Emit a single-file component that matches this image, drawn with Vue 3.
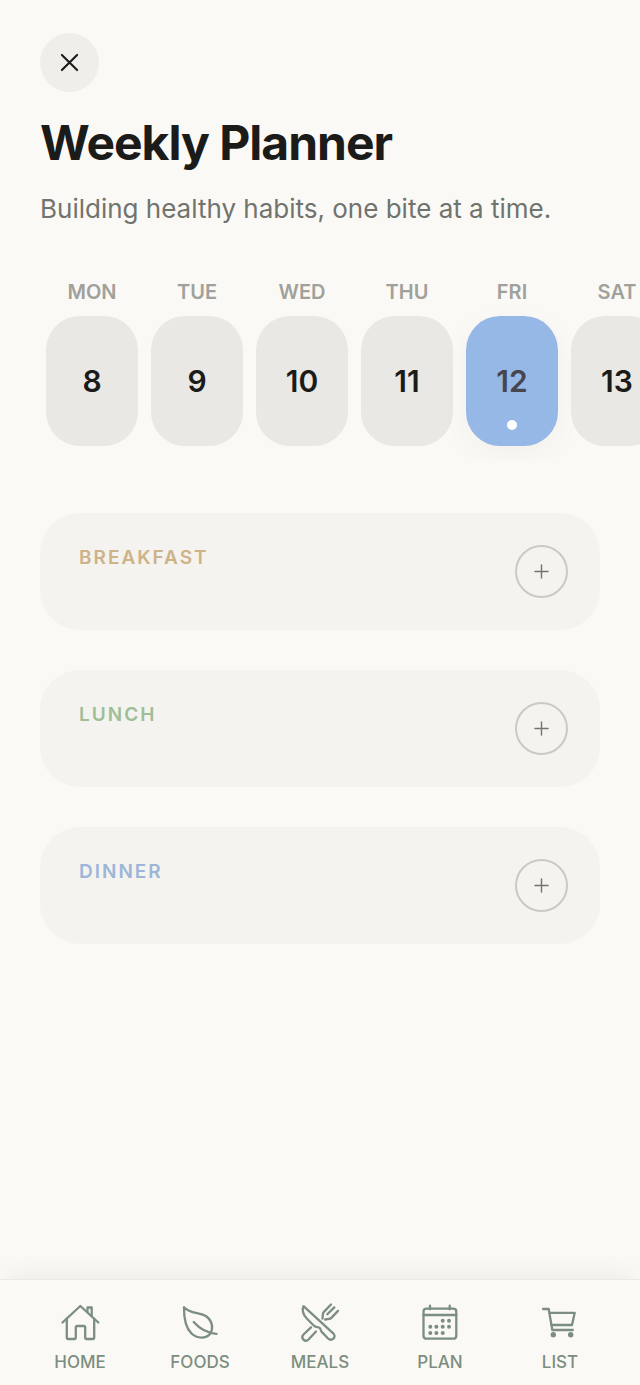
<script setup>
const days = [
  { name: 'MON', date: 8 },
  { name: 'TUE', date: 9 },
  { name: 'WED', date: 10 },
  { name: 'THU', date: 11 },
  { name: 'FRI', date: 12, active: true },
  { name: 'SAT', date: 13 },
]

const meals = [
  { name: 'BREAKFAST', tone: 'sand' },
  { name: 'LUNCH', tone: 'green' },
  { name: 'DINNER', tone: 'blue' },
]

const tabs = [
  {
    name: 'HOME',
    paths: [
      'M2.5 20.5 20.3 4l18 16.5',
      'M6.8 17v19q0 1 1 1h7q1 0 1-1V25.5q0-1.500 1.500-1.500h6.400q1.500 0 1.500 1.500V36q0 1 1 1h7q1 0 1-1V17',
      'M27.500 10V5.500h4.200v8.500',
    ],
  },
  {
    name: 'FOODS',
    paths: [
      'M4 5.200C3.800 18 6.500 26.500 11.500 31.500C17 36.800 26 36.800 30 32C33.500 27 32.800 19.500 26.500 14.500C20 9.800 10.500 12.500 4 5.200Z',
      'M13.700 20C19 26 27 31 36.500 31.800',
    ],
  },
  {
    name: 'MEALS',
    paths: [
      'M3.500 4.200C1.500 9 4 13.500 7 16.800l7.500 7.400c1.500 1.400 4 .4 5.300 1.800 1 1.100.7 2.500 1.700 3.600l6.300 6.600c3.800 3.700 9-.8 5.700-4.500Z',
      'M11 25.300 3.500 32.500c-3.300 3.700 1.500 8.300 5 5l7.500-8',
      'm22.500 16.500.4-4.500q.1-1.200 1-2.100L31 2.500M27.300 12.200l7-6.800M38 8.900l-6.700 7q-.9.9-2.100 1l-4.200.6',
    ],
  },
  {
    name: 'PLAN',
    paths: [
      'M6.500 6.700h26.800q3 0 3 3v24q0 3-3 3H6.500q-3 0-3-3v-24q0-3 3-3Z',
      'M3.500 13h32.800M10 3.700v3.600M29.700 3.700v3.600',
    ],
    dots: [
      [22.7, 18.8], [29, 18.8],
      [10.3, 24.8], [16.4, 24.8], [22.7, 24.8], [29, 24.8],
      [10.3, 31], [16.4, 31], [22.7, 31],
    ],
    r: 2,
  },
  {
    name: 'LIST',
    paths: [
      'M3 7h5.700l3.600 21h20.500',
      'M9.500 10.800h25.200L32 23H11.400',
    ],
    dots: [[13.3, 32.7], [30.7, 32.7]],
    r: 2.7,
  },
]
</script>

<template>
  <div class="page">
    <header class="head">
      <button class="close" type="button" aria-label="Close">
        <svg viewBox="0 0 20 20" aria-hidden="true"><path d="M2 2l16 16M18 2 2 18" /></svg>
      </button>
      <h1>Weekly Planner</h1>
      <p>Building healthy habits, one bite at a time.</p>
    </header>

    <section class="days" aria-label="Days">
      <div v-for="d in days" :key="d.name" class="day">
        <span :id="'day-' + d.name" class="day-name">{{ d.name }}</span>
        <button
          type="button"
          class="pill"
          :class="{ active: d.active }"
          :aria-describedby="'day-' + d.name"
        >
          {{ d.date }}
          <span v-if="d.active" class="marker"></span>
        </button>
      </div>
    </section>

    <main class="meals">
      <section v-for="m in meals" :key="m.name" class="meal">
        <h2 :class="m.tone">{{ m.name }}</h2>
        <button class="add" type="button" :aria-label="'Add ' + m.name.toLowerCase()">
          <svg viewBox="0 0 16 16" aria-hidden="true"><path d="M8 1v14M1 8h14" /></svg>
        </button>
      </section>
    </main>

    <nav class="tabs">
      <a v-for="t in tabs" :key="t.name" href="#" class="tab">
        <svg viewBox="0 0 40 40" aria-hidden="true">
          <path v-for="p in t.paths" :key="p" :d="p" />
          <circle v-for="(c, i) in t.dots" :key="i" :cx="c[0]" :cy="c[1]" :r="t.r" />
        </svg>
        <span>{{ t.name }}</span>
      </a>
    </nav>
  </div>
</template>

<style>
body {
  margin: 0;
  background: #fbf9f5;
}
</style>

<style scoped>
.page {
  display: flex;
  flex-direction: column;
  min-height: 100vh;
  overflow: hidden;
  background: #fbf9f5;
  color: #1b1b19;
  font-family: Inter, "Liberation Sans", sans-serif;
}
button {
  padding: 0;
  border: 0;
  font: inherit;
  color: inherit;
  cursor: pointer;
}
svg {
  display: block;
  fill: none;
  stroke: currentColor;
  stroke-linecap: round;
  stroke-linejoin: round;
}
.head {
  padding: 33px 40px 0;
}
.close {
  display: grid;
  place-items: center;
  width: 59px;
  height: 59px;
  border-radius: 50%;
  background: #efeeea;
}
.close svg {
  width: 19px;
  height: 19px;
  stroke-width: 2.2;
}
h1 {
  margin: 19px 0 0;
  font-size: 48px;
  line-height: 64px;
  font-weight: 700;
  letter-spacing: -1px;
  white-space: nowrap;
}
.head p {
  margin: 16px 0 0;
  font-size: 26px;
  line-height: 36px;
  font-weight: 400;
  color: #70736e;
}
.days {
  display: flex;
  gap: 13px;
  padding: 53px 0 14px 46px;
  overflow: hidden;
}
.day {
  display: flex;
  flex: none;
  flex-direction: column;
  align-items: center;
  gap: 12px;
}
.day-name {
  font-size: 20px;
  line-height: 24px;
  font-weight: 600;
  color: #a0a19b;
}
.pill {
  position: relative;
  width: 92px;
  height: 130px;
  border-radius: 34px;
  background: #e9e8e4;
  font-size: 30px;
  font-weight: 600;
}
.pill.active {
  background: #96b8e6;
  color: #46464f;
  box-shadow: 0 8px 32px rgba(40, 30, 20, 0.04);
}
.marker {
  position: absolute;
  bottom: 16px;
  left: 50%;
  width: 10px;
  height: 10px;
  margin-left: -5px;
  border-radius: 50%;
  background: #fff;
}
.meals {
  display: flex;
  flex-direction: column;
  gap: 40px;
  padding: 53px 40px 40px;
}
.meal {
  display: flex;
  align-items: flex-start;
  justify-content: space-between;
  padding: 32px 32px 32px 39px;
  border-radius: 40px;
  background: #f4f3ef;
}
h2 {
  margin: 0;
  font-size: 19px;
  line-height: 26px;
  font-weight: 600;
  letter-spacing: 2px;
}
.sand { color: #ceb288; }
.green { color: #9fbe98; }
.blue { color: #9db6d8; }
.add {
  display: grid;
  place-items: center;
  box-sizing: border-box;
  width: 53px;
  height: 53px;
  border: 2px solid #c9cac5;
  border-radius: 50%;
  background: transparent;
  color: #73746f;
}
.add svg {
  width: 15px;
  height: 15px;
  stroke-width: 1.5;
}
.tabs {
  display: flex;
  margin-top: auto;
  padding: 22px 20px 12px;
  border-top: 1px solid #ece9e9;
  background: #fbf9f5;
  box-shadow: 0 -10px 26px -8px rgba(40, 30, 30, 0.07);
}
.tab {
  display: flex;
  flex: 1;
  flex-direction: column;
  align-items: center;
  gap: 9px;
  color: #7b8e80;
  text-decoration: none;
  font-size: 17px;
  line-height: 22px;
  font-weight: 500;
}
.tab svg {
  width: 40px;
  height: 40px;
  stroke-width: 2.3;
}
.tab circle {
  fill: currentColor;
  stroke: none;
}
</style>
